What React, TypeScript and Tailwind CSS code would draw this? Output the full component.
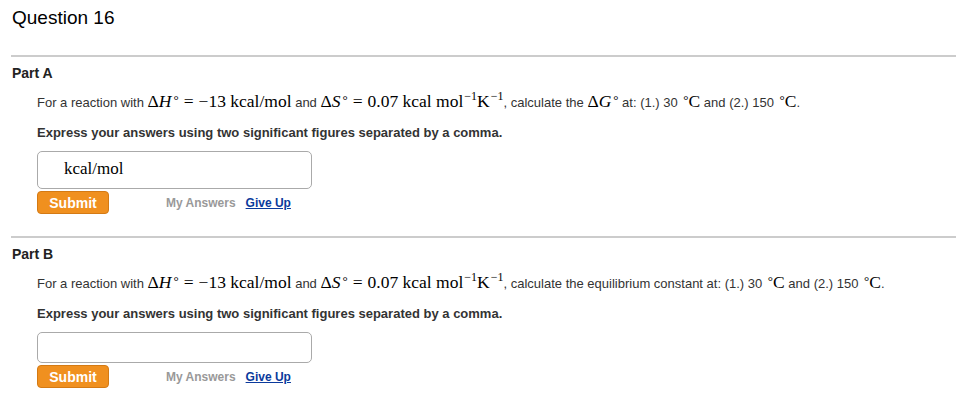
import React from 'react';

const M: React.FC<{ children: React.ReactNode }> = ({ children }) => (
  <span className="font-['Liberation_Serif',serif] text-[17.5px] leading-none text-black">{children}</span>
);

const I: React.FC<{ children: React.ReactNode }> = ({ children }) => <i className="italic">{children}</i>;

const Sup: React.FC<{ children: React.ReactNode }> = ({ children }) => (
  <sup className="relative -top-[7px] text-[12px] ml-[1px]">{children}</sup>
);

const Ring = () => <span className="relative -top-[3px] ml-[2px] text-[13px]">°</span>;

const Eq = () => <span className="mx-[5px]">=</span>;

const Given = () => (
  <>
    For a reaction with{' '}
    <M>
      Δ<I>H</I>
      <Ring />
      <Eq />
      −13 kcal/mol
    </M>{' '}
    and{' '}
    <M>
      Δ<I>S</I>
      <Ring />
      <Eq />
      0.07 kcal mol<Sup>−1</Sup>K<Sup>−1</Sup>
    </M>
  </>
);

const Deg = () => (
  <M>
    <Ring />C
  </M>
);

const Actions = () => (
  <div className="flex items-center">
    <button className="w-[72px] h-[23px] rounded-[4px] border border-[#d47a14] bg-[#f0901f] text-white font-bold text-[14px] leading-none">
      Submit
    </button>
    <span className="ml-[57px] text-[12px] font-bold text-[#999]">My Answers</span>
    <a className="ml-[10px] text-[12px] font-bold text-[#0b3a9c] underline">Give Up</a>
  </div>
);

interface PartProps {
  label: string;
  question: React.ReactNode;
  unit?: string;
  inputH: string;
}

const Part: React.FC<PartProps> = ({ label, question, unit, inputH }) => (
  <section>
    <div className="ml-[11px] h-[2px] bg-[#cccccc]" />
    <h2 className="ml-[12px] mt-[8px] text-[14px] font-bold text-[#222] leading-[17px]">{label}</h2>
    <div className="ml-[37px]">
      <p className="mt-[10px] text-[13px] text-[#333] leading-[22px]">{question}</p>
      <p className="mt-[11px] text-[13px] font-bold text-[#333] leading-[16px]">
        Express your answers using two significant figures separated by a comma.
      </p>
      <div
        className={`mt-[10px] w-[275px] ${inputH} rounded-[5px] border border-[#aaaaaa] flex items-center pl-[26px]`}
      >
        {unit && <span className="font-['Liberation_Serif',serif] text-[17px] text-black -mt-[3px]">{unit}</span>}
      </div>
      <div className="mt-[2px]">
        <Actions />
      </div>
    </div>
  </section>
);

export default function App() {
  return (
    <div className="w-[956px] h-[406px] bg-white overflow-hidden font-['Liberation_Sans',Arial,sans-serif]">
      <h1 className="pl-[12px] pt-[6px] text-[19px] leading-[24px] text-black">Question 16</h1>
      <div className="mt-[25px]">
        <Part
          label="Part A"
          inputH="h-[38px]"
          unit="kcal/mol"
          question={
            <>
              <Given />, calculate the{' '}
              <M>
                Δ<I>G</I>
                <Ring />
              </M>{' '}
              at: (1.) 30 <Deg /> and (2.) 150 <Deg />.
            </>
          }
        />
      </div>
      <div className="mt-[22px]">
        <Part
          label="Part B"
          inputH="h-[31px]"
          question={
            <>
              <Given />, calculate the equilibrium constant at: (1.) 30 <Deg /> and (2.) 150 <Deg />.
            </>
          }
        />
      </div>
    </div>
  );
}
